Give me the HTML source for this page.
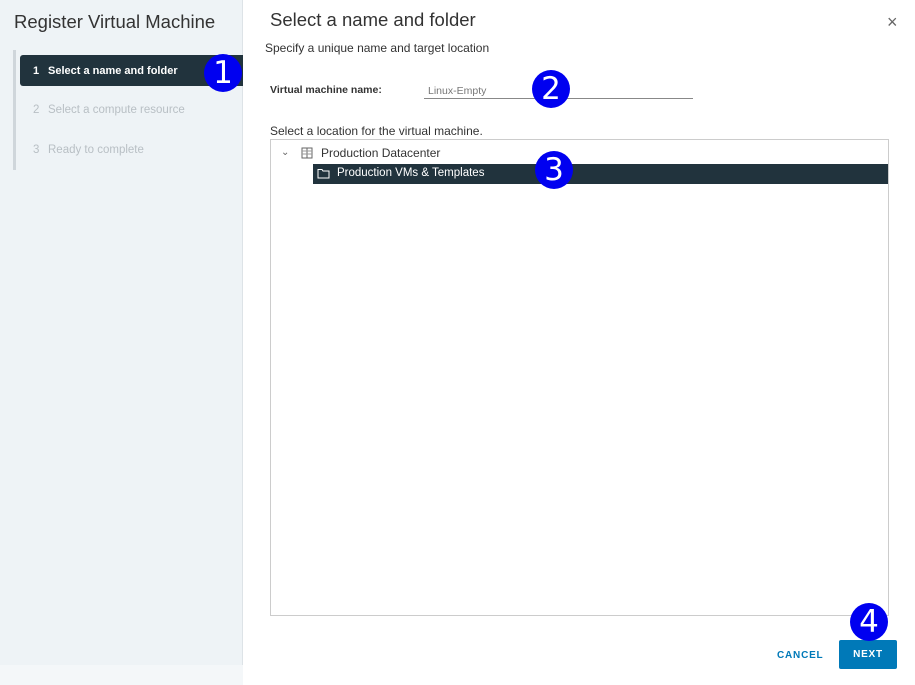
<!DOCTYPE html>
<html><head><style>
*{margin:0;padding:0;box-sizing:border-box}
body{width:915px;height:685px;position:relative;background:#fff;font-family:"Liberation Sans","DejaVu Sans",sans-serif;overflow:hidden;color:#222}
.abs{position:absolute}
.left{left:0;top:0;width:243px;height:685px;background:#eef3f6;border-right:1px solid #dde3e7}
.badge{position:absolute;width:38px;height:38px;border-radius:50%;background:#0000f0;color:#fff;font-family:"DejaVu Sans",sans-serif;font-size:31px;text-align:center;line-height:38px}
</style></head><body>
<div class="abs left"></div>
<div class="abs" style="left:0;top:665px;width:243px;height:20px;background:#f4f7f9"></div>
<div class="abs" style="left:14px;top:11px;font-size:18.5px;color:#333">Register Virtual Machine</div>
<div class="abs" style="left:13px;top:50px;width:3px;height:120px;background:#cfd6db"></div>
<div class="abs" style="left:20px;top:55px;width:223px;height:31px;background:#21333d;border-radius:3px 0 0 3px"></div>
<div class="abs" style="left:33px;top:65px;font-size:11px;color:#fff;font-weight:bold">1</div>
<div class="abs" style="left:48px;top:65px;font-size:11px;color:#fff;font-weight:bold">Select a name and folder</div>
<div class="abs" style="left:33px;top:104px;font-size:11.5px;color:#b8bfc4">2</div>
<div class="abs" style="left:48px;top:104px;font-size:11.5px;color:#b8bfc4">Select a compute resource</div>
<div class="abs" style="left:33px;top:144px;font-size:11.5px;color:#b8bfc4">3</div>
<div class="abs" style="left:48px;top:144px;font-size:11.5px;color:#b8bfc4">Ready to complete</div>

<div class="abs" style="left:270px;top:9px;font-size:18.5px;color:#333">Select a name and folder</div>
<div class="abs" style="left:887px;top:12px;font-size:18px;color:#666">×</div>
<div class="abs" style="left:265px;top:41px;font-size:12px;color:#333">Specify a unique name and target location</div>
<div class="abs" style="left:270px;top:84px;font-size:10.5px;color:#333;font-weight:bold">Virtual machine name:</div>
<div class="abs" style="left:428px;top:85px;font-size:10.5px;color:#777">Linux-Empty</div>
<div class="abs" style="left:424px;top:98px;width:269px;height:1px;background:#888"></div>
<div class="abs" style="left:270px;top:124px;font-size:12px;color:#333">Select a location for the virtual machine.</div>
<div class="abs" style="left:270px;top:139px;width:619px;height:477px;border:1px solid #ccc"></div>
<div class="abs" style="left:281px;top:147px;font-size:10px;color:#666">&#x2304;</div>
<svg class="abs" style="left:301px;top:147px" width="12" height="12"><rect x="1" y="1" width="10" height="10" fill="none" stroke="#666"/><line x1="6" y1="1" x2="6" y2="11" stroke="#666"/><line x1="1" y1="4" x2="11" y2="4" stroke="#999"/><line x1="1" y1="7" x2="11" y2="7" stroke="#999"/></svg>
<div class="abs" style="left:321px;top:146px;font-size:12px;color:#333">Production Datacenter</div>
<div class="abs" style="left:313px;top:164px;width:575px;height:20px;background:#21333d"></div>
<svg class="abs" style="left:317px;top:168px" width="13" height="11"><path d="M1 1.5h4l1 1.5h6v7H1z" fill="none" stroke="#fff"/></svg>
<div class="abs" style="left:337px;top:167px;font-size:11.5px;color:#fff">Production VMs &amp; Templates</div>

<div class="abs" style="left:777px;top:650px;font-size:10px;color:#0079b8;font-weight:bold;letter-spacing:.8px">CANCEL</div>
<div class="abs" style="left:839px;top:640px;width:58px;height:29px;background:#0079b8;border-radius:2px;color:#fff;font-size:10px;font-weight:bold;text-align:center;line-height:30px;letter-spacing:.8px">NEXT</div>

<div class="badge" style="left:204px;top:54px">1</div>
<div class="badge" style="left:532px;top:70px">2</div>
<div class="badge" style="left:535px;top:151px">3</div>
<div class="badge" style="left:850px;top:603px">4</div>
</body></html>
